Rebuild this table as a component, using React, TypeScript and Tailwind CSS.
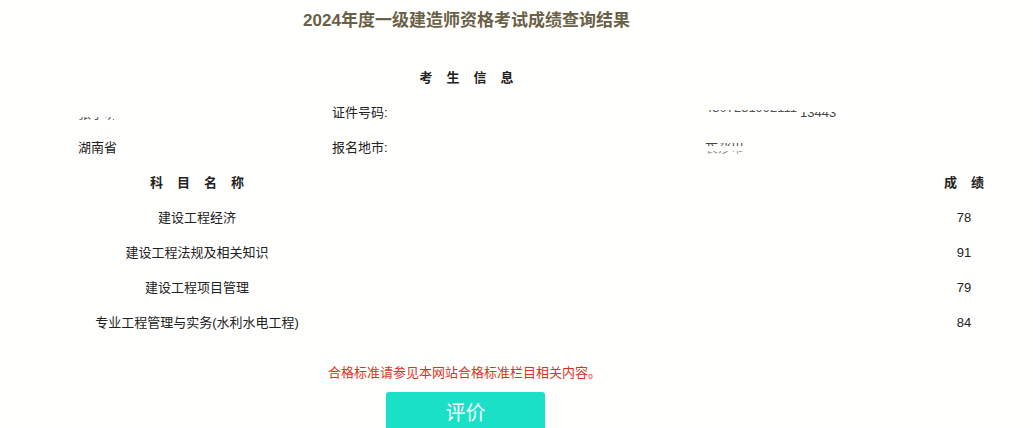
const font = "font-['Liberation_Sans','Noto_Sans_CJK_SC',sans-serif]"

// 被遮挡的个人信息，只露出字形的一小条
function Masked({
  text,
  cut,
  show,
  className = '',
}: {
  text: string
  cut: number
  show: number
  className?: string
}) {
  return (
    <span className={`block overflow-hidden leading-[14px] ${className}`} style={{ height: show }}>
      <span className="block whitespace-nowrap" style={{ marginTop: -cut }}>
        {text}
      </span>
    </span>
  )
}

const scores = [
  { name: '建设工程经济', score: 78 },
  { name: '建设工程法规及相关知识', score: 91 },
  { name: '建设工程项目管理', score: 79 },
  { name: '专业工程管理与实务(水利水电工程)', score: 84 },
]

export default function App() {
  return (
    <div className={`h-[428px] w-[1033px] overflow-hidden bg-[#fffffd] text-[13px] text-[#222] ${font}`}>
      {/* 标题 */}
      <div className="flex h-[42px] w-[933px] items-center justify-center">
        <h1 className="text-[17px] font-bold text-[#6a5f47]">2024年度一级建造师资格考试成绩查询结果</h1>
      </div>

      <div className="mt-[18px]">
        <div className="flex h-[35px] w-[933px] items-center justify-center">
          <span className="pl-[14px] font-bold tracking-[14px]">考生信息</span>
        </div>

        <div className="flex h-[35px] items-center pl-[78px]">
          <div className="h-[35px] w-[254px] pt-[22px]">
            <Masked text="张小明" cut={10} show={3} className="w-[36px] text-[#555]" />
          </div>
          <div className="w-[373px]">证件号码:</div>
          <div className="h-[35px] pt-[15px]">
            <div className="flex items-start">
              <Masked text="4307231992111" cut={9} show={2} className="text-[#555]" />
              <Masked text="13443" cut={6} show={6} className="ml-[3px] mt-[2px] text-[#444]" />
            </div>
          </div>
        </div>

        <div className="flex h-[35px] items-center pl-[78px]">
          <div className="w-[254px]">湖南省</div>
          <div className="w-[373px]">报名地市:</div>
          <div className="flex flex-col gap-[5px] pt-[2px]">
            <Masked text="长沙市" cut={6} show={3} className="text-[#444]" />
            <Masked text="长沙市" cut={10} show={3} className="text-[#999]" />
          </div>
        </div>

        <div className="grid h-[35px] grid-cols-[394px_1fr_120px] items-center pr-[9px]">
          <div className="pl-[14px] text-center font-bold tracking-[14px]">科目名称</div>
          <div />
          <div className="pl-[14px] text-center font-bold tracking-[14px]">成绩</div>
        </div>

        {scores.map((s) => (
          <div key={s.name} className="grid h-[35px] grid-cols-[394px_1fr_120px] items-center pr-[9px]">
            <div className="text-center">{s.name}</div>
            <div />
            <div className="text-center">{s.score}</div>
          </div>
        ))}
      </div>

      <div className="w-[929px] pt-[26px] text-center leading-[14px] text-[#e0311f]">
        合格标准请参见本网站合格标准栏目相关内容。
      </div>

      <div className="mt-[12px] flex w-[931px] justify-center">
        <button
          type="button"
          className="h-[40px] w-[159px] rounded-[3px] bg-[#1ae0c7] pt-[2px] text-[20px] text-[#f4fffd]"
        >
          评价
        </button>
      </div>
    </div>
  )
}
